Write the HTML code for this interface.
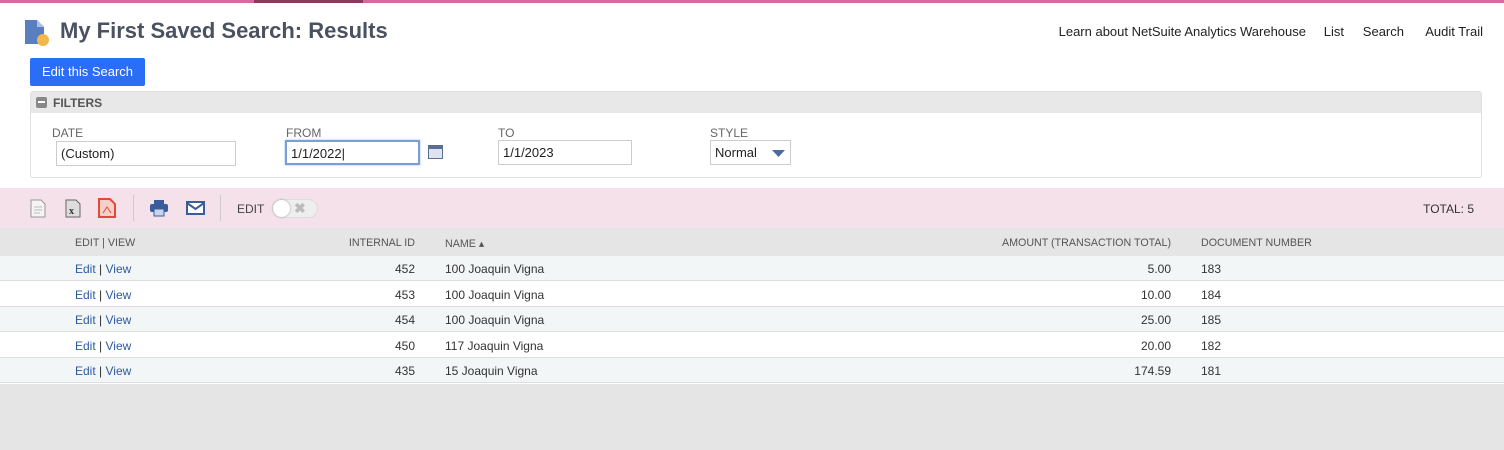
<!DOCTYPE html><html><head><style>
*{box-sizing:border-box;margin:0;padding:0}
body{width:1504px;height:450px;overflow:hidden;background:#fff;font-family:"Liberation Sans",sans-serif;color:#333;position:relative}
.a{position:absolute}
.lbl{font-size:12px;color:#666;text-transform:uppercase}
.inp{position:absolute;height:25px;border:1px solid #ccc;font-size:13px;padding:4px 4px;color:#222;background:#fff}
.hd{font-size:10.7px;color:#555}
.row{position:absolute;left:0;width:1504px;height:25px;border-bottom:1px solid #ddd;font-size:12px;color:#333}
.row span{position:absolute;top:6px}
.lk{color:#2c5aa0}
.nav{position:absolute;top:24px;font-size:13px;color:#222}
</style></head><body>
<div class="a" style="left:0;top:0;width:1504px;height:3px;background:#d36b9c"></div>
<div class="a" style="left:254px;top:0;width:109px;height:3px;background:#8a3a5a"></div>
<svg class="a" style="left:24px;top:19px" width="26" height="28"><path d="M1 1h12l7 7v17H1z" fill="#5a7fbf"/><path d="M13 1v7h7z" fill="#a8c0e6"/><circle cx="19" cy="21" r="6" fill="#f1b74a"/></svg>
<div class="a" style="left:60px;top:18px;font-size:22px;font-weight:bold;color:#4a5160">My First Saved Search: Results</div>
<div class="nav" style="right:198px">Learn about NetSuite Analytics Warehouse</div>
<div class="nav" style="right:160px">List</div>
<div class="nav" style="right:100px">Search</div>
<div class="nav" style="right:21px">Audit Trail</div>
<div class="a" style="left:30px;top:58px;width:115px;height:28px;background:#2a6ef5;border-radius:2px;color:#fff;font-size:13px;line-height:28px;text-align:center">Edit this Search</div>
<div class="a" style="left:30px;top:91px;width:1452px;height:87px;border:1px solid #e0e0e0;border-radius:3px"></div>
<div class="a" style="left:31px;top:92px;width:1450px;height:21px;background:#e8e8e8"></div>
<div class="a" style="left:36px;top:97px;width:11px;height:11px;background:#888;border-radius:2px"></div>
<div class="a" style="left:38px;top:101px;width:7px;height:2px;background:#fff"></div>
<div class="a" style="left:53px;top:96px;font-size:12px;font-weight:bold;color:#555">FILTERS</div>
<div class="a lbl" style="left:52px;top:126px">Date</div>
<div class="inp" style="left:56px;top:141px;width:180px">(Custom)</div>
<div class="a lbl" style="left:286px;top:126px">From</div>
<div class="inp" style="left:285px;top:140px;width:135px;border:2px solid #7a9fd8;box-shadow:0 0 2px #9bb8e8">1/1/2022|</div>
<svg class="a" style="left:428px;top:145px" width="15" height="14"><rect width="15" height="14" fill="#5a6e95"/><rect x="1" y="4" width="13" height="9" fill="#dde4f0"/></svg>
<div class="a lbl" style="left:498px;top:126px">To</div>
<div class="inp" style="left:498px;top:140px;width:134px">1/1/2023</div>
<div class="a lbl" style="left:710px;top:126px">Style</div>
<div class="inp" style="left:710px;top:140px;width:81px">Normal</div>
<svg class="a" style="left:772px;top:150px" width="13" height="8"><path d="M0 0h13L6.5 7z" fill="#4a6aa0"/></svg>
<div class="a" style="left:0;top:188px;width:1504px;height:40px;background:#f5e1e9"></div>
<svg class="a" style="left:30px;top:199px" width="16" height="19"><path d="M1 1h10l4 4v13H1z" fill="#f4f4f4" stroke="#999"/><path d="M4 8h8M4 11h8M4 14h6" stroke="#bbb"/></svg>
<svg class="a" style="left:65px;top:199px" width="16" height="19"><path d="M1 1h10l4 4v13H1z" fill="#ddd" stroke="#666"/><text x="4" y="15" font-size="10" font-weight="bold" fill="#333" font-family="Liberation Serif">x</text></svg>
<svg class="a" style="left:98px;top:198px" width="18" height="20"><path d="M1 1h11l5 5v13H1z" fill="#f5d0c8" stroke="#e04a3a" stroke-width="2"/><path d="M5 15l4-6 4 6" stroke="#e04a3a" fill="none"/></svg>
<div class="a" style="left:133px;top:195px;width:1px;height:26px;background:#ccc"></div>
<svg class="a" style="left:149px;top:199px" width="20" height="18"><rect x="5" y="1" width="10" height="5" fill="#3a5d9a"/><rect x="1" y="5" width="18" height="8" rx="2" fill="#3a5d9a"/><rect x="5" y="10" width="10" height="7" fill="#c8d4ea" stroke="#3a5d9a"/></svg>
<svg class="a" style="left:186px;top:201px" width="19" height="14"><rect x="1" y="1" width="17" height="12" fill="#fff" stroke="#3a5d9a" stroke-width="2"/><path d="M1 2l8.5 6L18 2" stroke="#3a5d9a" stroke-width="2" fill="none"/></svg>
<div class="a" style="left:220px;top:195px;width:1px;height:26px;background:#ccc"></div>
<div class="a" style="left:237px;top:202px;font-size:12px;color:#444">EDIT</div>
<div class="a" style="left:272px;top:199px;width:46px;height:19px;border-radius:10px;background:#eee;border:1px solid #ddd"></div>
<div class="a" style="left:273px;top:200px;width:17px;height:17px;border-radius:9px;background:#fff;box-shadow:0 0 2px #999"></div>
<div class="a" style="left:294px;top:200px;font-size:14px;font-weight:bold;color:#bbb">✖</div>
<div class="a" style="right:30px;top:202px;font-size:12px;color:#333">TOTAL: 5</div>
<div class="a" style="left:0;top:228px;width:1504px;height:28px;background:#e5e5e5"></div>
<div class="a hd" style="left:75px;top:237px">EDIT | VIEW</div>
<div class="a hd" style="right:1089px;top:237px">INTERNAL ID</div>
<div class="a hd" style="left:445px;top:237px">NAME ▴</div>
<div class="a hd" style="right:333px;top:237px">AMOUNT (TRANSACTION TOTAL)</div>
<div class="a hd" style="left:1201px;top:237px">DOCUMENT NUMBER</div>
<div class="row" style="top:256px;background:#f3f6f6"><span style="left:75px"><span class="lk" style="position:static">Edit</span> | <span class="lk" style="position:static">View</span></span><span style="right:1089px">452</span><span style="left:445px">100 Joaquin Vigna</span><span style="right:333px">5.00</span><span style="left:1201px">183</span></div>
<div class="row" style="top:282px;background:#fff"><span style="left:75px"><span class="lk" style="position:static">Edit</span> | <span class="lk" style="position:static">View</span></span><span style="right:1089px">453</span><span style="left:445px">100 Joaquin Vigna</span><span style="right:333px">10.00</span><span style="left:1201px">184</span></div>
<div class="row" style="top:307px;background:#f3f6f6"><span style="left:75px"><span class="lk" style="position:static">Edit</span> | <span class="lk" style="position:static">View</span></span><span style="right:1089px">454</span><span style="left:445px">100 Joaquin Vigna</span><span style="right:333px">25.00</span><span style="left:1201px">185</span></div>
<div class="row" style="top:333px;background:#fff"><span style="left:75px"><span class="lk" style="position:static">Edit</span> | <span class="lk" style="position:static">View</span></span><span style="right:1089px">450</span><span style="left:445px">117 Joaquin Vigna</span><span style="right:333px">20.00</span><span style="left:1201px">182</span></div>
<div class="row" style="top:358px;background:#f3f6f6"><span style="left:75px"><span class="lk" style="position:static">Edit</span> | <span class="lk" style="position:static">View</span></span><span style="right:1089px">435</span><span style="left:445px">15 Joaquin Vigna</span><span style="right:333px">174.59</span><span style="left:1201px">181</span></div>
<div class="a" style="left:0;top:384px;width:1504px;height:66px;background:#e5e5e5"></div>
</body></html>
